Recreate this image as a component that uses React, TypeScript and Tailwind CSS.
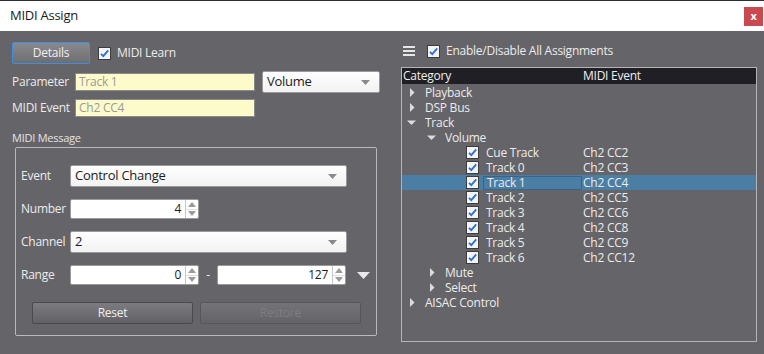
import React from "react";

const font = {
  fontFamily: '"Segoe UI", "Open Sans", "Noto Sans", sans-serif',
  letterSpacing: "-0.25px",
};

function Check({ className = "" }: { className?: string }) {
  return (
    <svg width="13" height="13" viewBox="0 0 13 13" className={`shrink-0 ${className}`}>
      <rect x="0.5" y="0.5" width="12" height="12" fill="#f4f4f4" stroke="#3c3c3c" />
      <path d="M3 6.8 L5.3 9.2 L10.2 3.4" fill="none" stroke="#2a6fd6" strokeWidth="1.8" />
    </svg>
  );
}

function Arrow({ open }: { open?: boolean }) {
  return open ? (
    <svg width="9" height="9" viewBox="0 0 9 9">
      <path d="M0 2.5 L9 2.5 L4.5 7 Z" fill="#dcdcdc" />
    </svg>
  ) : (
    <svg width="9" height="9" viewBox="0 0 9 9">
      <path d="M2 0 L6.5 4.5 L2 9 Z" fill="#dcdcdc" />
    </svg>
  );
}

function Select({ value, className = "" }: { value: string; className?: string }) {
  return (
    <div
      className={`h-[22px] bg-gradient-to-b from-white to-[#f2f2f2] border border-[#9a9a9a] rounded-[2px] flex items-center justify-between pl-[4px] pr-[9px] text-[13px] text-[#1a1a1a] ${className}`}
    >
      <span>{value}</span>
      <svg width="9" height="5" viewBox="0 0 9 5">
        <path d="M0 0 L9 0 L4.5 5 Z" fill="#8a8a8a" />
      </svg>
    </div>
  );
}

function Spin({ value }: { value: string }) {
  return (
    <div className="w-[129px] h-[20px] bg-white border border-[#9a9a9a] rounded-[2px] flex text-[12px] text-[#1a1a1a]">
      <div className="flex-1 flex items-center justify-end pr-[4px]">{value}</div>
      <div className="w-[13px] border-l border-[#c8c8c8] flex flex-col">
        <div className="flex-1 flex items-center justify-center border-b border-[#e0e0e0]">
          <svg width="8" height="5" viewBox="0 0 8 5">
            <path d="M0 5 L8 5 L4 0 Z" fill="#9a9a9a" />
          </svg>
        </div>
        <div className="flex-1 flex items-center justify-center">
          <svg width="8" height="5" viewBox="0 0 8 5">
            <path d="M0 0 L8 0 L4 5 Z" fill="#9a9a9a" />
          </svg>
        </div>
      </div>
    </div>
  );
}

const tracks = [
  ["Cue Track", "Ch2 CC2"],
  ["Track 0", "Ch2 CC3"],
  ["Track 1", "Ch2 CC4"],
  ["Track 2", "Ch2 CC5"],
  ["Track 3", "Ch2 CC6"],
  ["Track 4", "Ch2 CC8"],
  ["Track 5", "Ch2 CC9"],
  ["Track 6", "Ch2 CC12"],
];

export default function App() {
  return (
    <div
      className="w-[764px] h-[354px] bg-[#656469] flex flex-col text-[#ececec] text-[12px] whitespace-nowrap"
      style={font}
    >
      {/* title bar */}
      <div className="h-[31px] bg-white border-t border-[#2d2d2d] flex items-center justify-between pl-[10px] pr-[1px]">
        <span className="text-[13px] text-[#1a1a1a]">MIDI Assign</span>
        <div className="w-[19px] h-[19px] bg-[#c94a4e] flex items-center justify-center text-white text-[11px] font-bold leading-none pb-[2px]">
          x
        </div>
      </div>

      <div className="flex flex-1">
        {/* left */}
        <div className="w-[389px] pl-[12px] flex flex-col">
          <div className="mt-[11px] h-[22px] flex items-center">
            <div className="w-[78px] h-[22px] rounded-[2px] border border-[#3d8fe0] bg-gradient-to-b from-[#8a898d] to-[#6e6d72] flex items-center justify-center text-[#f0f0f0]">
              Details
            </div>
            <Check className="ml-[8px]" />
            <span className="ml-[6px]">MIDI Learn</span>
          </div>

          <div className="mt-[7px] h-[22px] flex items-center">
            <span className="w-[63px]">Parameter</span>
            <div className="w-[180px] h-[18px] bg-[#fdfbc9] border border-[#8a8a8a] flex items-center pl-[3px] text-[#9a9a9a]">
              Track 1
            </div>
            <Select value="Volume" className="ml-[7px] w-[118px]" />
          </div>

          <div className="mt-[6px] h-[18px] flex items-center">
            <span className="w-[63px]">MIDI Event</span>
            <div className="w-[180px] h-[18px] bg-[#fdfbc9] border border-[#8a8a8a] flex items-center pl-[3px] text-[#9a9a9a]">
              Ch2 CC4
            </div>
          </div>

          <div className="mt-[14px] text-[11px] leading-[14px] text-[#e4e4e4]">MIDI Message</div>

          <div className="mt-[2px] ml-[3px] w-[362px] h-[189px] border border-[#b9b9b9] rounded-[2px] pl-[5px] pt-[17px] flex flex-col">
            <div className="h-[22px] flex items-center">
              <span className="w-[49px]">Event</span>
              <Select value="Control Change" className="w-[277px]" />
            </div>
            <div className="mt-[12px] h-[20px] flex items-center">
              <span className="w-[49px]">Number</span>
              <Spin value="4" />
            </div>
            <div className="mt-[12px] h-[22px] flex items-center">
              <span className="w-[49px]">Channel</span>
              <Select value="2" className="w-[277px]" />
            </div>
            <div className="mt-[12px] h-[20px] flex items-center">
              <span className="w-[49px]">Range</span>
              <Spin value="0" />
              <span className="w-[18px] text-center">-</span>
              <Spin value="127" />
              <svg width="13" height="7" viewBox="0 0 13 7" className="ml-[11px]">
                <path d="M0 0 L13 0 L6.5 7 Z" fill="#e8e8ee" />
              </svg>
            </div>
            <div className="mt-[17px] ml-[11px] flex gap-[7px]">
              <div className="w-[161px] h-[22px] rounded-[2px] border border-[#4a4a4e] bg-gradient-to-b from-[#7c7b80] to-[#626166] flex items-center justify-center text-[#f0f0f0]">
                Reset
              </div>
              <div className="w-[161px] h-[22px] rounded-[2px] border border-[#56555a] bg-gradient-to-b from-[#747378] to-[#646368] flex items-center justify-center text-[#7e7d82]">
                Restore
              </div>
            </div>
          </div>
        </div>

        {/* right */}
        <div className="flex flex-col pl-[12px]">
          <div className="mt-[11px] h-[18px] flex items-center">
            <svg width="12" height="10" viewBox="0 0 12 10" className="ml-[2px]">
              <rect x="0" y="0" width="12" height="2" fill="#e6e6e6" />
              <rect x="0" y="4" width="12" height="2" fill="#e6e6e6" />
              <rect x="0" y="8" width="12" height="2" fill="#e6e6e6" />
            </svg>
            <Check className="ml-[12px]" />
            <span className="ml-[6px]">Enable/Disable All Assignments</span>
          </div>

          <div className="mt-[7px] w-[356px] h-[275px] border border-[#b4b4b4] flex flex-col">
            <div className="h-[16px] bg-[#1f1f25] flex items-center text-[#f0f0f0] leading-none">
              <span className="w-[181px] pl-[1px]">Category</span>
              <span>MIDI Event</span>
            </div>
            <div className="flex flex-col leading-[15px] pt-[1px]">
              {["Playback", "DSP Bus"].map((t) => (
                <div key={t} className="h-[15px] flex items-center">
                  <span className="w-[23px] pl-[6px] flex items-center"><Arrow /></span>
                  <span>{t}</span>
                </div>
              ))}
              <div className="h-[15px] flex items-center">
                <span className="w-[23px] pl-[5px] flex items-center"><Arrow open /></span>
                <span>Track</span>
              </div>
              <div className="h-[15px] flex items-center">
                <span className="w-[43px] pl-[25px] flex items-center"><Arrow open /></span>
                <span>Volume</span>
              </div>
              {tracks.map(([name, ev]) => {
                const sel = name === "Track 1";
                return (
                  <div key={name} className={`h-[15px] flex items-center ${sel ? "bg-[#4b7ea4]" : ""}`}>
                    <span className="w-[64px] shrink-0" />
                    <Check />
                    <span
                      className={`ml-[4px] w-[99px] h-[14px] flex items-center pl-[3px] ${sel ? "border border-[#36648a]" : ""}`}
                    >
                      {name}
                    </span>
                    <span className="ml-[1px]">{ev}</span>
                  </div>
                );
              })}
              {["Mute", "Select"].map((t) => (
                <div key={t} className="h-[15px] flex items-center">
                  <span className="w-[43px] pl-[26px] flex items-center"><Arrow /></span>
                  <span>{t}</span>
                </div>
              ))}
              <div className="h-[15px] flex items-center">
                <span className="w-[23px] pl-[6px] flex items-center"><Arrow /></span>
                <span>AISAC Control</span>
              </div>
            </div>
          </div>
        </div>
      </div>
    </div>
  );
}
